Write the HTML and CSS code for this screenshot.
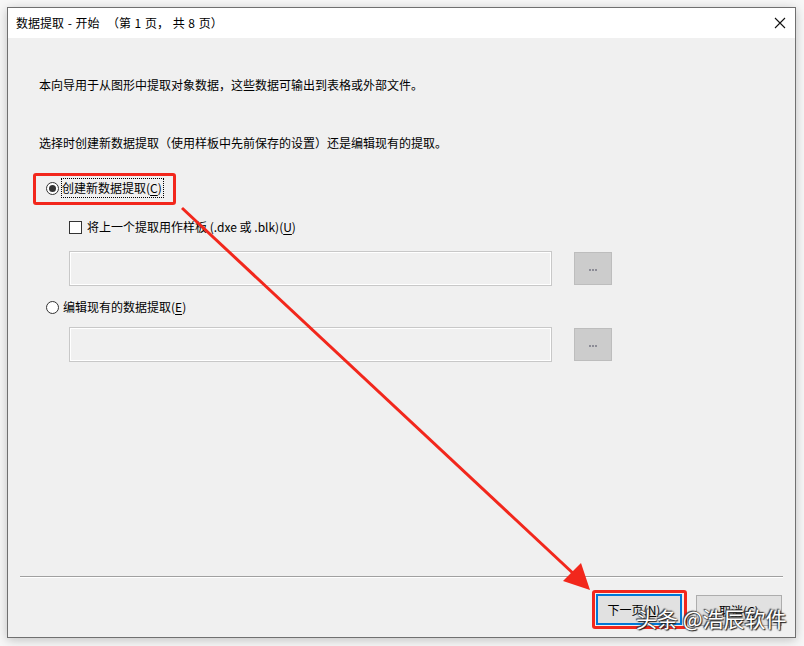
FILE: index.html
```html
<!DOCTYPE html>
<html>
<head>
    <meta charset="UTF-8">
    <title>数据提取 - 开始</title>
    <link rel="stylesheet" href="styles.css">
</head>
<body>
    <div class="window">
        <div class="titlebar">
            <span class="title">数据提取 - 开始 &nbsp;（第 1 页， 共 8 页）</span>
            <svg class="close" width="12" height="12" viewBox="0 0 12 12">
                <path d="M1 1 L11 11 M11 1 L1 11" stroke="#111" stroke-width="1.1" fill="none"/>
            </svg>
        </div>
        <div class="content">
            <p class="intro">本向导用于从图形中提取对象数据，这些数据可输出到表格或外部文件。</p>
            <p class="ask">选择时创建新数据提取（使用样板中先前保存的设置）还是编辑现有的提取。</p>

            <div class="option first">
                <span class="radio checked"></span>
                <span class="label focus">创建新数据提取(<u>C</u>)</span>
            </div>
            <div class="option sub">
                <span class="check"></span>
                <span class="label">将上一个提取用作样板 (.dxe 或 .blk)(<u>U</u>)</span>
            </div>
            <div class="pathrow">
                <div class="field"></div>
                <div class="browse"><i></i><i></i><i></i></div>
            </div>

            <div class="option second">
                <span class="radio"></span>
                <span class="label">编辑现有的数据提取(<u>E</u>)</span>
            </div>
            <div class="pathrow">
                <div class="field"></div>
                <div class="browse"><i></i><i></i><i></i></div>
            </div>
        </div>
        <div class="footer">
            <div class="sep"></div>
            <div class="buttons">
                <div class="btn default">下一页(<u>N</u>)</div>
                <div class="btn">取消(<u>C</u>)</div>
            </div>
        </div>
    </div>

    <!-- annotations drawn over the screenshot -->
    <div class="mark mark-radio"></div>
    <div class="mark mark-next"></div>
    <svg class="arrow" width="804" height="646" viewBox="0 0 804 646">
        <line x1="182" y1="208" x2="576" y2="576" stroke="#f2271c" stroke-width="3"/>
        <polygon points="590,590 563,581 581,563" fill="#f2271c"/>
    </svg>
    <div class="watermark">头条 @浩辰软件</div>
</body>
</html>
```
FILE: styles.css
```css
body {
    margin: 0;
    width: 804px;
    height: 646px;
    background: #f7f7f7;
    font-family: "Noto Sans CJK SC", "Noto Sans", sans-serif;
    font-size: 12px;
    color: #000;
    overflow: hidden;
    position: relative;
}
.window {
    margin: 7px 0 0 7px;
    width: 787px;
    height: 629px;
    border: 1px solid #707070;
    background: #f0f0f0;
    box-shadow: 0 2px 10px rgba(0,0,0,.22);
    display: flex;
    flex-direction: column;
}
.titlebar {
    height: 30px;
    background: #fff;
    display: flex;
    align-items: center;
    justify-content: space-between;
    padding: 0 9px 0 8px;
}
.title {
    line-height: 16px;
    word-spacing: 1px;
}
.close {
    display: block;
}
.content {
    flex: 1;
    padding: 0 0 0 31px;
}
.content p {
    margin: 0;
    line-height: 16px;
}
.intro {
    padding-top: 39px;
}
.ask {
    padding-top: 42px;
}
.option {
    display: flex;
    align-items: center;
    height: 20px;
}
.option.first {
    margin-top: 27px;
    margin-left: 7px;
}
.option.sub {
    margin-top: 19px;
    margin-left: 30px;
}
.option.second {
    margin-top: 11px;
    margin-left: 7px;
}
.label {
    line-height: 16px;
    padding: 1px 1px;
}
.label u {
    text-underline-offset: 2px;
}
.focus {
    outline: 1px dotted #000;
    outline-offset: 0;
    padding: 1px 1px 1px 0;
}
.radio {
    width: 11px;
    height: 11px;
    border: 1px solid #333;
    border-radius: 50%;
    background: #fff;
    margin-right: 3px;
    position: relative;
}
.radio.checked::after {
    content: "";
    position: absolute;
    left: 2px;
    top: 2px;
    width: 7px;
    height: 7px;
    border-radius: 50%;
    background: #333;
}
.check {
    width: 11px;
    height: 11px;
    border: 1px solid #333;
    background: #fff;
    margin-right: 4px;
}
.pathrow {
    display: flex;
    align-items: flex-start;
    gap: 22px;
    margin-left: 30px;
    margin-top: 14px;
}
.option.second + .pathrow {
    margin-top: 10px;
}
.field {
    width: 481px;
    height: 33px;
    border: 1px solid #c8c8c8;
    box-shadow: inset 0 0 0 1px #fff;
    background: #f0f0f0;
}
.browse {
    margin-top: 1px;
    width: 36px;
    border: 1px solid #bdbdbd;
    background: #cccccc;
    display: flex;
    justify-content: center;
    align-items: center;
    gap: 1px;
    padding-top: 3px;
    height: 28px;
}
.browse i {
    width: 2px;
    height: 2px;
    background: #8c8c96;
}
.footer {
    height: 61px;
    padding: 0 12px 0 12px;
}
.sep {
    height: 1px;
    background: #a0a0a0;
    border-bottom: 1px solid #fff;
}
.buttons {
    display: flex;
    justify-content: flex-end;
    gap: 14px;
    margin-top: 16px;
    padding-right: 1px;
}
.btn {
    width: 84px;
    height: 29px;
    margin-top: 1px;
    border: 1px solid #adadad;
    background: #e1e1e1;
    text-align: center;
    line-height: 29px;
}
.btn.default {
    width: 82px;
    height: 27px;
    margin-top: 0;
    line-height: 27px;
    border: 2px solid #0078d7;
    text-indent: -10px;
}
.mark {
    position: absolute;
    border: 3px solid #f2271c;
    border-radius: 3px;
}
.mark-radio {
    left: 33px;
    top: 173px;
    width: 137px;
    height: 26px;
}
.mark-next {
    left: 592px;
    top: 590px;
    width: 89px;
    height: 33px;
}
.arrow {
    position: absolute;
    left: 0;
    top: 0;
}
.watermark {
    position: absolute;
    left: 636px;
    top: 604px;
    font-size: 21px;
    line-height: 28px;
    color: #fff;
    text-shadow: 0 0 2px #222, 1px 1px 1px #222, -1px -1px 1px #444;
    white-space: nowrap;
}
```
